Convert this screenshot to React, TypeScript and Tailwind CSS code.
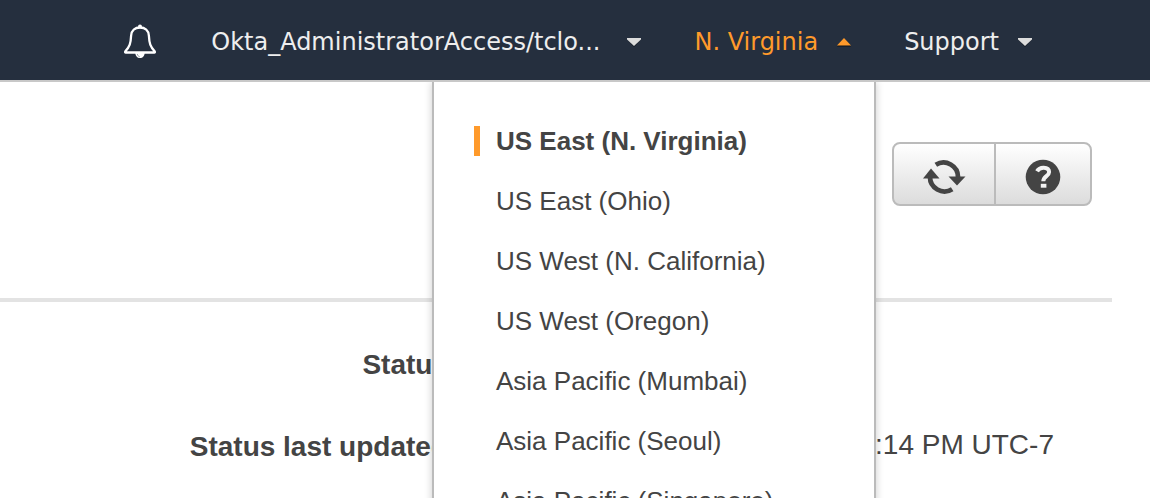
import React, { useState } from "react";

const regions = [
  "US East (N. Virginia)",
  "US East (Ohio)",
  "US West (N. California)",
  "US West (Oregon)",
  "Asia Pacific (Mumbai)",
  "Asia Pacific (Seoul)",
  "Asia Pacific (Singapore)",
];

function BellIcon() {
  return (
    <svg width="34" height="36" viewBox="0 0 34 36" fill="none" aria-hidden="true">
      <path
        d="M17 3.500c-5 0-8.600 3-8.900 8.200C7.700 19.500 6.800 22.500 2.200 27.600c-.3.500-.1.900.500.900h28.600c.6 0 .8-.4.500-.9-4.600-5.100-5.500-8.100-5.900-15.900C25.600 6.500 22 3.500 17 3.500Z"
        stroke="#fff"
        strokeWidth="2.300"
        strokeLinejoin="round"
      />
      <circle cx="17" cy="2.600" r="2" fill="#fff" />
      <path d="M12.300 28.500c0 3.500 2 5.600 4.700 5.600s4.700-2.100 4.700-5.600Z" fill="#fff" />
      <path d="M14.300 30c.4 1.600 1.200 2.500 2.500 2.800" stroke="#9ba3ac" strokeWidth="1" />
    </svg>
  );
}

function Caret({ up = false }: { up?: boolean }) {
  return (
    <svg width="16" height="10" viewBox="0 0 16 10" aria-hidden="true">
      {up ? (
        <>
          <path d="M1 9.500 8 2l7 7.500Z" fill="#0b1118" />
          <path d="M1 8.500 8 1l7 7.500Z" fill="#ff9a2b" />
        </>
      ) : (
        <>
          <path d="M1 2.500h14L8 10Z" fill="#10161f" />
          <path d="M1 1h14v1.500L8 9 1 2.500Z" fill="#dcdcdc" />
        </>
      )}
    </svg>
  );
}

function RefreshIcon() {
  return (
    <svg width="43" height="36" viewBox="0 0 43 36" fill="none" aria-hidden="true">
      <path d="M12.800 5.800A14.500 14.500 0 0 1 35 18.500" stroke="#444" strokeWidth="4.800" />
      <path d="M25.500 17.500h17L34 26.500Z" fill="#444" />
      <path d="M29.200 30.200A14.500 14.500 0 0 1 7 17.500" stroke="#444" strokeWidth="4.800" />
      <path d="M0 19.500h16.500L8 9.500Z" fill="#444" />
    </svg>
  );
}

function HelpIcon() {
  return (
    <svg width="36" height="36" viewBox="0 0 36 36" fill="none" aria-hidden="true">
      <circle cx="18" cy="18" r="17.300" fill="#444" />
      <path
        d="M12 12.300c1.500-2.600 4-3.700 6.700-3.600 3.300.1 5.400 1.700 5.400 4.300 0 4.300-5.800 4.100-5.800 9.300"
        stroke="#f4f4f4"
        strokeWidth="4"
      />
      <path d="M15.800 24.800h5.600v3.900h-5.600z" fill="#f4f4f4" />
    </svg>
  );
}

export default function App() {
  const [open, setOpen] = useState(true);
  const [region, setRegion] = useState(regions[0]);

  return (
    <div className="h-screen overflow-hidden bg-white font-['Liberation_Sans',Arial,sans-serif] text-[#444]">
      <header className="relative flex h-[82px] items-center justify-end border-b-2 border-[#c8c8c8] bg-[#252f3e] pt-1 pr-[117px] font-['DejaVu_Sans',Verdana,sans-serif] text-2xl text-[#eee] [text-shadow:0_2px_1px_#000]">
        <button type="button" aria-label="Notifications" className="mr-[54px]">
          <BellIcon />
        </button>
        <button type="button" className="mr-[52px] flex items-center gap-[26px]">
          Okta_AdministratorAccess/tclo...
          <Caret />
        </button>
        <button
          type="button"
          aria-expanded={open}
          onClick={() => setOpen(!open)}
          className="mr-[52px] flex items-center gap-[18px] text-[#ff9a2b]"
        >
          N. Virginia
          <Caret up />
        </button>
        <button type="button" className="flex items-center gap-[18px]">
          Support
          <Caret />
        </button>

        {open && (
          <ul className="absolute top-full right-[274px] z-10 mt-0.5 w-[444px] border-x-2 border-[#bbb] bg-white py-[29px] pl-10 font-['Liberation_Sans',Arial,sans-serif] text-[26px] text-[#444] shadow-[0_0_8px_rgba(0,0,0,0.2)] [clip-path:inset(0_-12px_-12px_-12px)] [text-shadow:none]">
            {regions.map((name) => (
              <li key={name} className="flex h-15 items-center">
                <button
                  type="button"
                  onClick={() => setRegion(name)}
                  className={
                    name === region
                      ? "border-l-6 border-[#ff9a2b] pl-4 text-left leading-[30px] font-bold"
                      : "border-l-6 border-transparent pl-4 text-left leading-[30px]"
                  }
                >
                  {name}
                </button>
              </li>
            ))}
          </ul>
        )}
      </header>

      <main className="mr-[38px]">
        <div className="flex justify-end border-b-4 border-[#e3e3e3] pt-[60px] pr-5 pb-[92px]">
          <div className="flex h-16 rounded-lg border-2 border-[#bbb] bg-linear-to-b from-white to-[#dcdcdc]">
            <button
              type="button"
              aria-label="Refresh"
              className="flex w-[102px] items-center justify-center border-r-2 border-[#bbb] pt-1.5"
            >
              <RefreshIcon />
            </button>
            <button
              type="button"
              aria-label="Help"
              className="flex w-[94px] items-center justify-center pt-1.5"
            >
              <HelpIcon />
            </button>
          </div>
        </div>
        <dl className="grid grid-cols-[448px_1fr] pt-[22px] text-[28px]">
          <dt className="h-[82px] text-right leading-[82px] font-bold">Status</dt>
          <dd />
          <dt className="h-[82px] text-right leading-[82px] font-bold">Status last updated</dt>
          <dd className="pr-[58px] text-right leading-[78px]">:14 PM UTC-7</dd>
        </dl>
      </main>
    </div>
  );
}
